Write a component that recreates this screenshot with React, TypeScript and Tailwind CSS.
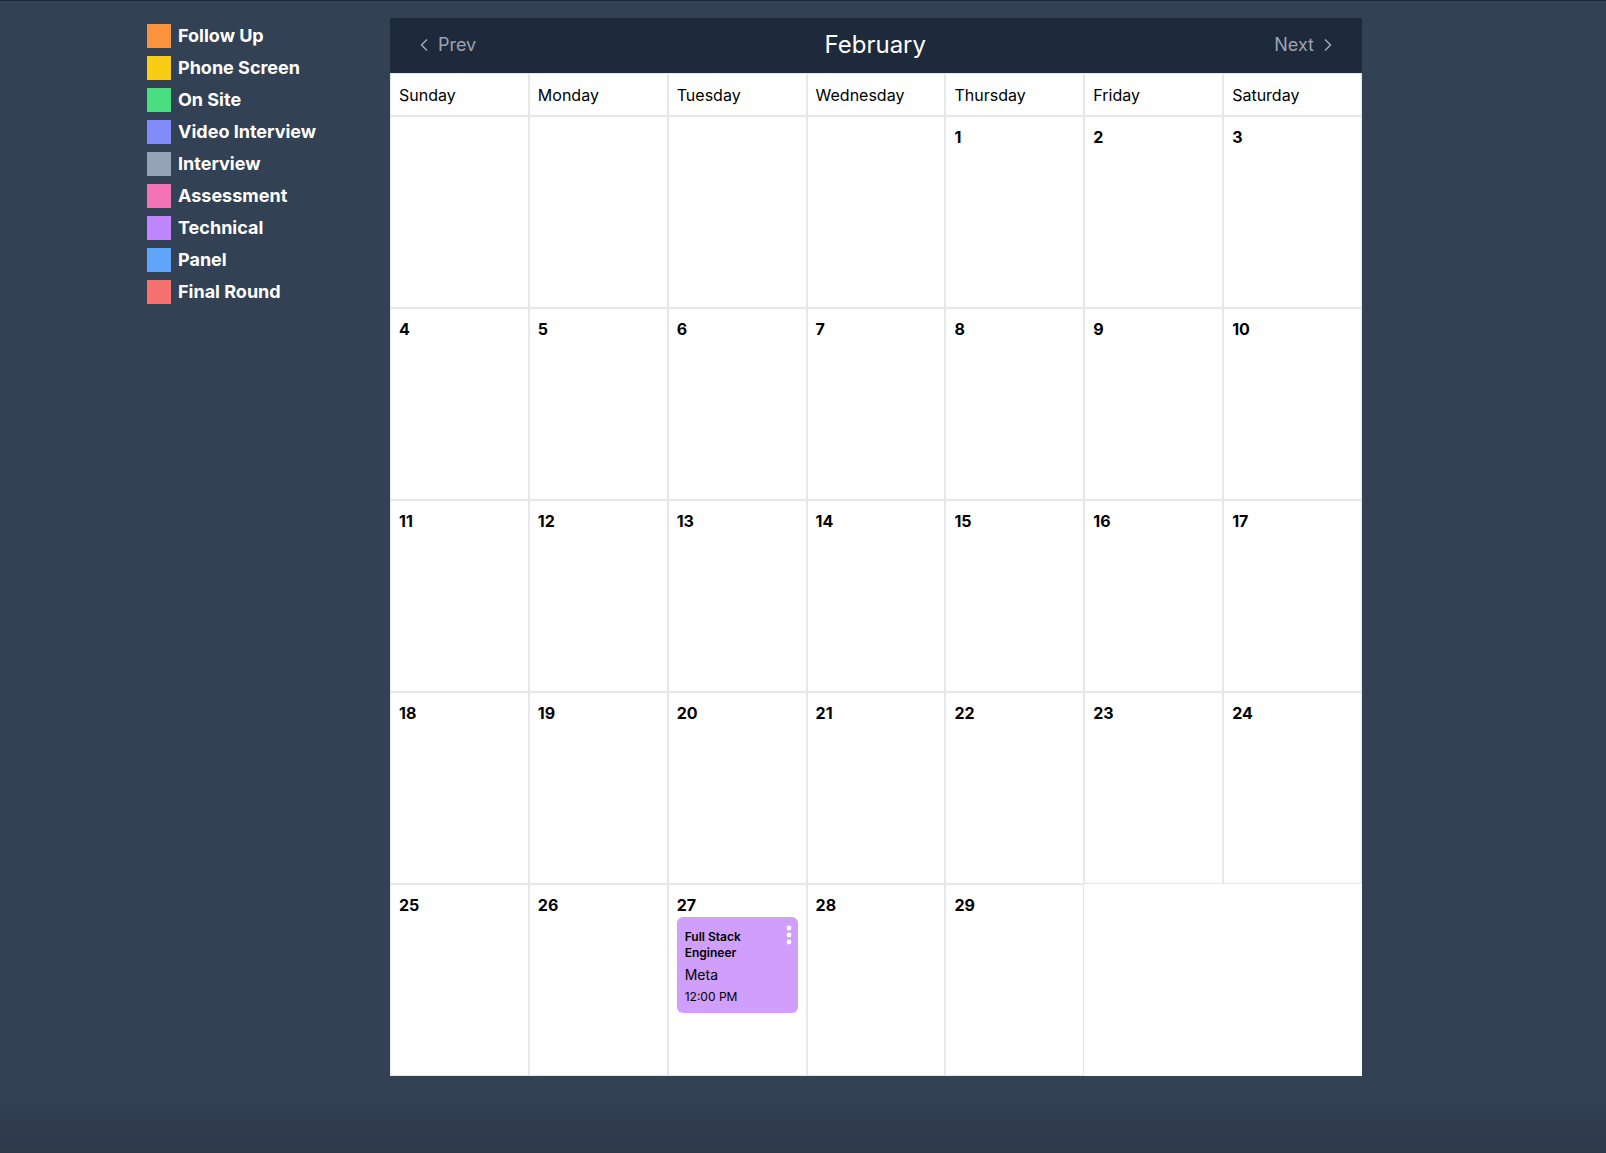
import React from 'react';
import { ChevronLeft, ChevronRight } from 'lucide-react';

const legend = [
  { label: 'Follow Up', color: 'bg-[#fb923c]' },
  { label: 'Phone Screen', color: 'bg-[#facc15]' },
  { label: 'On Site', color: 'bg-[#4ade80]' },
  { label: 'Video Interview', color: 'bg-[#818cf8]' },
  { label: 'Interview', color: 'bg-[#94a3b8]' },
  { label: 'Assessment', color: 'bg-[#f472b6]' },
  { label: 'Technical', color: 'bg-[#c084fc]' },
  { label: 'Panel', color: 'bg-[#60a5fa]' },
  { label: 'Final Round', color: 'bg-[#f87171]' }
];

const weekdays = ['Sunday', 'Monday', 'Tuesday', 'Wednesday', 'Thursday', 'Friday', 'Saturday'];

const events: Record<number, { title: string; company: string; time: string }[]> = {
  27: [{ title: 'Full Stack Engineer', company: 'Meta', time: '12:00 PM' }]
};

// February starts on a Thursday, 29 days
const firstDay = 4;
const daysInMonth = 29;

const cells: (number | null)[] = [
  ...Array(firstDay).fill(null),
  ...Array.from({ length: daysInMonth }, (_, i) => i + 1)
];

const App: React.FC = () => {
  return (
    <div
      className="min-h-screen border-t border-[#1e293b] bg-[linear-gradient(to_bottom,#334155_95%,#2d3848_100%)] pl-[147px] pt-[17px] flex items-start"
      style={{ fontFamily: 'Inter, "Noto Sans", sans-serif' }}
    >
      {/* Legend */}
      <div className="w-[243px] mt-[6px] flex flex-col gap-2">
        {legend.map((item) => (
          <div key={item.label} className="flex items-center gap-2">
            <div className={`w-6 h-6 ${item.color}`} />
            <span className="-ml-px text-lg leading-6 font-bold text-white">{item.label}</span>
          </div>
        ))}
      </div>

      {/* Calendar */}
      <div className="w-[972px] bg-white">
        <div className="h-[55px] bg-[#1e293b] flex items-center justify-between px-6 pb-[2px]">
          <button className="flex items-center gap-1 text-lg text-[#9ca3af]">
            <ChevronLeft className="w-5 h-5" />
            <span>Prev</span>
          </button>
          <h2 className="text-2xl text-white">February</h2>
          <button className="flex items-center gap-1 text-lg text-[#9ca3af]">
            <span>Next</span>
            <ChevronRight className="w-5 h-5" />
          </button>
        </div>

        <div className="grid grid-cols-7">
          {weekdays.map((day) => (
            <div key={day} className="h-[43px] border border-[#e5e7eb] flex items-center px-2 text-base text-black">
              {day}
            </div>
          ))}
          {cells.map((day, index) => (
            <div key={index} className="h-[192px] border border-[#e5e7eb] p-2">
              {day !== null && (
                <>
                  <div className="text-base leading-6 font-bold text-black">{day}</div>
                  {(events[day] || []).map((ev, i) => (
                    <div key={i} className="relative rounded-md bg-[#d09ffb] px-2 pt-3 pb-2 text-black">
                      <p className="pr-4 text-xs leading-4 font-semibold">{ev.title}</p>
                      <p className="mt-1 text-sm leading-5">{ev.company}</p>
                      <p className="mt-1 text-xs leading-4">{ev.time}</p>
                      <svg className="absolute top-2 right-[6px]" width="6" height="20" viewBox="0 0 6 20">
                        <circle cx="3" cy="3" r="2.4" fill="white" />
                        <circle cx="3" cy="10" r="2.4" fill="white" />
                        <circle cx="3" cy="17" r="2.4" fill="white" />
                      </svg>
                    </div>
                  ))}
                </>
              )}
            </div>
          ))}
        </div>
      </div>
    </div>
  );
};

export default App;
